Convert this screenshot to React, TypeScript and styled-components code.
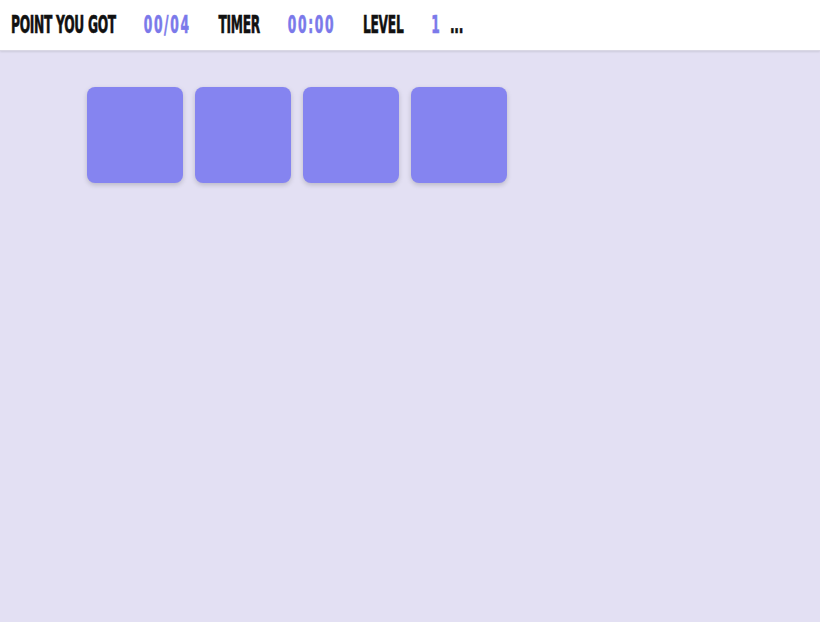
import styled, { createGlobalStyle } from "styled-components";

const GlobalStyle = createGlobalStyle`
  html, body {
    margin: 0;
    padding: 0;
    height: 100%;
  }
  body {
    background: #e3e0f3;
    font-family: "DejaVu Sans Condensed", "Liberation Sans", sans-serif;
  }
  #root {
    min-height: 100%;
  }
`;

interface Stat {
  label: string;
  value: string;
  suffix?: string;
}

const stats: Stat[] = [
  { label: "Point you got", value: "00/04" },
  { label: "Timer", value: "00:00" },
  { label: "Level", value: "1", suffix: "..." },
];

const cards = [1, 2, 3, 4];

const App = () => {
  return (
    <>
      <GlobalStyle />
      <Page>
        <Header>
          {/* no condensed display font offline, so the row is squeezed */}
          <StatsRow>
            {stats.map((stat) => (
              <StatGroup key={stat.label}>
                <Label>{stat.label}</Label>
                <Value>{stat.value}</Value>
                {stat.suffix && <Suffix>{stat.suffix}</Suffix>}
              </StatGroup>
            ))}
          </StatsRow>
        </Header>
        <Board>
          {cards.map((card) => (
            <Card key={card} />
          ))}
        </Board>
      </Page>
    </>
  );
};

export default App;

const Page = styled.div`
  min-height: 622px;
  display: flex;
  flex-direction: column;
`;

const Header = styled.header`
  height: 51px;
  background: #ffffff;
  display: flex;
  align-items: center;
  padding: 0 11px 1px;
  box-shadow: 0 1px 2px rgba(0, 0, 0, 0.1);
  border-bottom: 1px solid #d9d7e4;
  box-sizing: border-box;
`;

const StatsRow = styled.div`
  display: flex;
  align-items: baseline;
  gap: 49px;
  transform: scaleX(0.567);
  transform-origin: left center;
  white-space: nowrap;
`;

const StatGroup = styled.div`
  display: flex;
  align-items: baseline;
  gap: 49px;
`;

const Label = styled.span`
  font-size: 24px;
  font-weight: 700;
  text-transform: uppercase;
  letter-spacing: -0.5px;
  color: #111111;
  -webkit-text-stroke: 0.6px currentColor;
`;

const Value = styled(Label)`
  color: #7b79ea;
  letter-spacing: 3px;
`;

const Suffix = styled(Label)`
  margin-left: -34px;
`;

const Board = styled.main`
  display: flex;
  gap: 12px;
  padding: 36px 0 0 87px;
`;

const Card = styled.div`
  width: 96px;
  height: 96px;
  border-radius: 8px;
  background: #8584f0;
  box-shadow: 0 2px 5px rgba(0, 0, 0, 0.18);
`;
